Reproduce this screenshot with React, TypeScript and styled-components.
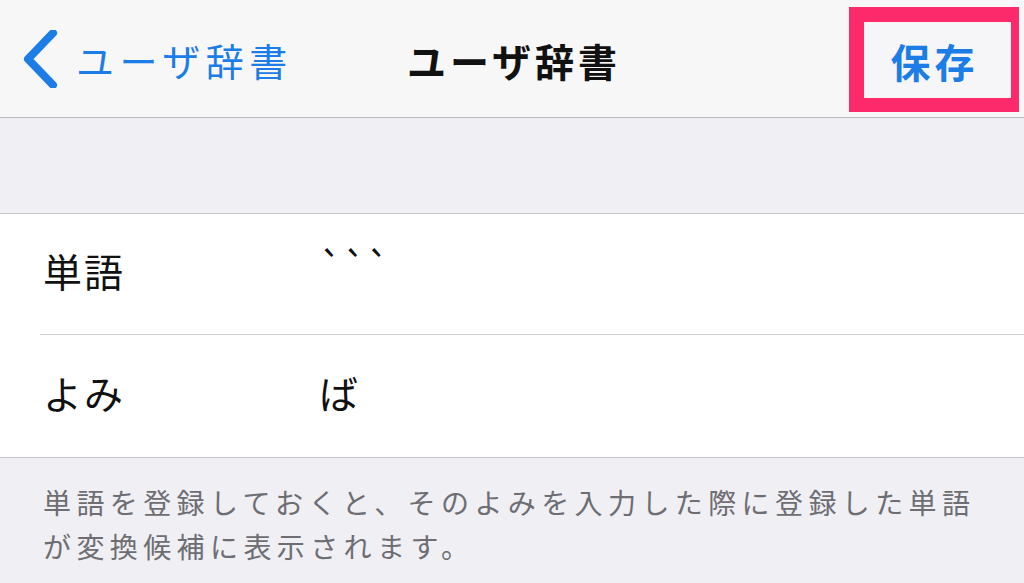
import React from "react";
import styled, { createGlobalStyle } from "styled-components";

const Global = createGlobalStyle`
  html, body { margin: 0; padding: 0; }
  body {
    width: 1024px;
    height: 583px;
    overflow: hidden;
    background: #efeff4;
    font-family: "Noto Sans CJK JP", "Noto Sans", sans-serif;
  }
`;

const Page = styled.div`
  width: 1024px;
  height: 583px;
  display: flex;
  flex-direction: column;
  background: #efeff4;
`;

const NavBar = styled.header`
  height: 117px;
  flex: none;
  display: grid;
  grid-template-columns: 1fr auto 1fr;
  align-items: center;
  background: #f7f7f8;
  border-bottom: 1px solid #b9b9bd;
`;

const BackButton = styled.div`
  display: flex;
  align-items: center;
  gap: 18px;
  padding-left: 22px;
  color: #1c7de6;
`;

const BackLabel = styled.span`
  font-size: 38px;
  letter-spacing: 5.5px;
  line-height: 1;
  padding-top: 2px;
`;

const Title = styled.h1`
  margin: 0;
  font-size: 39px;
  font-weight: 700;
  letter-spacing: 4px;
  line-height: 1;
  color: #111;
  padding-top: 4px;
  margin-left: 4px;
`;

const SaveBox = styled.div`
  justify-self: end;
  align-self: start;
  margin-top: 7px;
  margin-right: 5px;
  width: 147px;
  height: 76px;
  border-style: solid;
  border-color: #fc2a6b;
  border-width: 15px 8px 14px 15px;
  background: #f6f6f8;
  display: flex;
  align-items: center;
  justify-content: center;
`;

const SaveLabel = styled.span`
  font-size: 40px;
  font-weight: 700;
  letter-spacing: 4px;
  line-height: 1;
  color: #1c7de6;
  margin-left: -6px;
  margin-top: 2px;
`;

const Gap = styled.div`
  height: 95px;
  flex: none;
  border-bottom: 1px solid #c8c7cc;
`;

const Group = styled.section`
  background: #fff;
  border-bottom: 1px solid #c8c7cc;
  flex: none;
`;

const Row = styled.div<{ $divider?: boolean }>`
  height: ${(p) => (p.$divider ? 121 : 122)}px;
  box-sizing: border-box;
  padding-bottom: 8px;
  margin-left: 40px;
  display: flex;
  align-items: center;
  border-bottom: ${(p) => (p.$divider ? "1px solid #d0d0d4" : "none")};
`;

const Label = styled.span`
  width: 276px;
  flex: none;
  font-size: 39px;
  letter-spacing: 2px;
  line-height: 1;
  color: #111;
  padding-left: 3px;
`;

const Value = styled.span<{ $raise?: number }>`
  font-size: 39px;
  line-height: 1;
  color: #111;
  letter-spacing: 0px;
  position: relative;
  top: ${(p) => -(p.$raise ?? 0)}px;
`;

const Footer = styled.p`
  margin: 0;
  padding: 22px 30px 0 43px;
  font-size: 28px;
  letter-spacing: 5.4px;
  line-height: 44px;
  color: #6d6d72;
`;

const Chevron = () => (
  <svg width="36" height="58" viewBox="0 0 36 58" aria-hidden>
    <path
      d="M31 3 L6 29 L31 55"
      fill="none"
      stroke="#1c7de6"
      strokeWidth="8"
      strokeLinecap="round"
      strokeLinejoin="round"
    />
  </svg>
);

export default function App() {
  return (
    <>
      <Global />
      <Page>
        <NavBar>
          <BackButton>
            <Chevron />
            <BackLabel>ユーザ辞書</BackLabel>
          </BackButton>
          <Title>ユーザ辞書</Title>
          <SaveBox>
            <SaveLabel>保存</SaveLabel>
          </SaveBox>
        </NavBar>
        <Gap />
        <Group>
          <Row $divider>
            <Label>単語</Label>
            <Value $raise={5}>```</Value>
          </Row>
          <Row>
            <Label>よみ</Label>
            <Value>ば</Value>
          </Row>
        </Group>
        <Footer>
          単語を登録しておくと、そのよみを入力した際に登録した単語が変換候補に表示されます。
        </Footer>
      </Page>
    </>
  );
}
